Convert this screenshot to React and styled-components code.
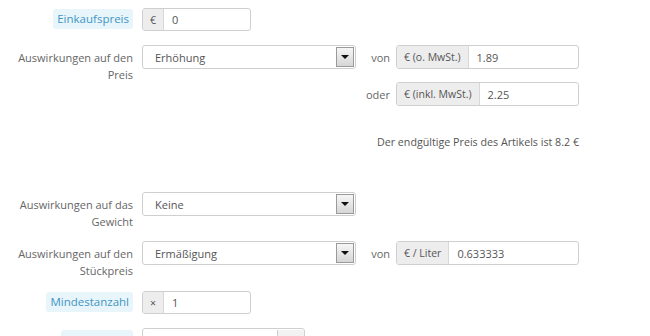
import React from 'react'
import styled, { createGlobalStyle } from 'styled-components'

const GlobalStyle = createGlobalStyle`
  html, body {
    margin: 0;
    padding: 0;
    background: #fff;
    overflow: hidden;
    height: 336px;
  }
  body {
    font-family: "Open Sans", "Liberation Sans", sans-serif;
    font-size: 11px;
    color: #666;
  }
`

const Form = styled.div`
  width: 650px;
  padding-top: 8px;
  display: flex;
  flex-direction: column;
`

const Row = styled.div`
  display: flex;
  align-items: flex-start;
  margin-top: ${p => p.$top || 0}px;
`

const LabelCol = styled.div`
  width: 133px;
  margin-right: 9px;
  text-align: right;
  line-height: 17px;
  padding-top: ${p => p.$pad ?? 4}px;
  color: #666;
  flex-shrink: 0;
`

const HintLabel = styled.span`
  display: inline-block;
  background: #e8f5fa;
  color: #3f95c4;
  line-height: 20px;
  padding: 0 4px;
  border-radius: 3px;
  font-size: 11.5px;
  min-width: ${p => p.$minW || 0}px;
`

const Select = styled.div`
  width: ${p => p.$w || 214}px;
  height: 24px;
  box-sizing: border-box;
  border: 1px solid #cfcfcf;
  border-radius: 3px;
  background: #fff;
  display: flex;
  align-items: center;
  justify-content: space-between;
  padding: 1px 1px 1px 12px;
  color: #555;
`

const ArrowButton = styled.span`
  width: 18px;
  height: 20px;
  box-sizing: border-box;
  border: 1px solid #9a9a9a;
  background: linear-gradient(#f6f6f6, #d6d6d6);
  display: flex;
  align-items: center;
  justify-content: center;
  &::after {
    content: '';
    border-left: 4px solid transparent;
    border-right: 4px solid transparent;
    border-top: 4px solid #111;
  }
`

const ChevronButton = styled.span`
  width: 26px;
  height: 100%;
  margin: -1px -1px -1px 0;
  border-left: 1px solid #cfcfcf;
  background: #f2f2f2;
  display: flex;
  align-items: center;
  justify-content: center;
  &::after {
    content: '';
    width: 5px;
    height: 5px;
    border-right: 1.5px solid #555;
    border-bottom: 1.5px solid #555;
    transform: rotate(45deg);
    margin-top: -3px;
  }
`

const InputGroup = styled.div`
  width: ${p => p.$w || 109}px;
  height: ${p => p.$h || 23}px;
  box-sizing: border-box;
  border: 1px solid #cfcfcf;
  border-radius: 3px;
  display: flex;
  align-items: stretch;
  overflow: hidden;
  background: #fff;
`

const Addon = styled.span`
  background: #ededed;
  border-right: 1px solid #d8d8d8;
  color: #555;
  font-size: 10.5px;
  padding: 0 7px;
  display: flex;
  align-items: center;
  white-space: nowrap;
`

const Value = styled.span`
  padding-left: 8px;
  display: flex;
  align-items: center;
  color: #555;
`

const SideCol = styled.div`
  display: flex;
  flex-direction: column;
  gap: 13px;
`

const SideRow = styled.div`
  display: flex;
  align-items: center;
`

const SideLabel = styled.span`
  width: 34px;
  text-align: right;
  margin-right: 6px;
  color: #666;
`

const Note = styled.div`
  width: 579px;
  text-align: right;
  line-height: 17px;
  font-size: 10.7px;
  color: #555;
  margin-top: ${p => p.$top}px;
`

const PriceInput = ({ label, addon, value, w = 183 }) => (
  <SideRow>
    <SideLabel>{label}</SideLabel>
    <InputGroup $w={w} $h={24}>
      <Addon>{addon}</Addon>
      <Value>{value}</Value>
    </InputGroup>
  </SideRow>
)

const App = () => (
  <>
    <GlobalStyle />
    <Form>
      <Row>
        <LabelCol $pad={1}><HintLabel>Einkaufspreis</HintLabel></LabelCol>
        <InputGroup>
          <Addon>€</Addon>
          <Value>0</Value>
        </InputGroup>
      </Row>

      <Row $top={14}>
        <LabelCol>Auswirkungen auf den<br />Preis</LabelCol>
        <Select>Erhöhung<ArrowButton /></Select>
        <SideCol>
          <PriceInput label="von" addon="€ (o. MwSt.)" value="1.89" />
          <PriceInput label="oder" addon="€ (inkl. MwSt.)" value="2.25" />
        </SideCol>
      </Row>

      <Note $top={28}>Der endgültige Preis des Artikels ist 8.2 €</Note>

      <Row $top={41}>
        <LabelCol>Auswirkungen auf das<br />Gewicht</LabelCol>
        <Select>Keine<ArrowButton /></Select>
      </Row>

      <Row $top={11}>
        <LabelCol>Auswirkungen auf den<br />Stückpreis</LabelCol>
        <Select>Ermäßigung<ArrowButton /></Select>
        <SideCol>
          <PriceInput label="von" addon="€ / Liter" value="0.633333" />
        </SideCol>
      </Row>

      <Row $top={12}>
        <LabelCol $pad={1}><HintLabel>Mindestanzahl</HintLabel></LabelCol>
        <InputGroup>
          <Addon>×</Addon>
          <Value>1</Value>
        </InputGroup>
      </Row>

      <Row $top={14}>
        <LabelCol $pad={2}><HintLabel $minW={64}>&nbsp;</HintLabel></LabelCol>
        <Select $w={163}>&nbsp;<ChevronButton /></Select>
      </Row>
    </Form>
  </>
)

export default App
